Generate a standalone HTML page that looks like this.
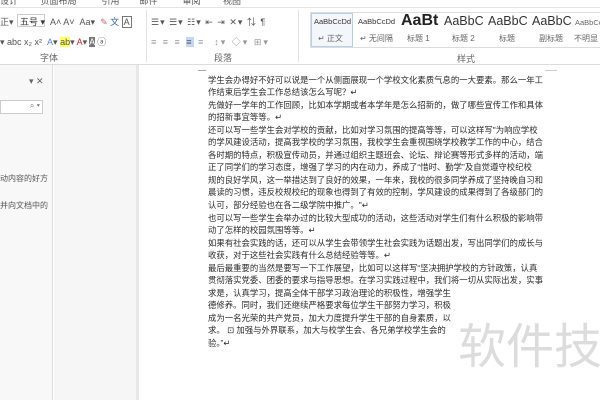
<!DOCTYPE html>
<html><head><meta charset="utf-8"><style>
*{margin:0;padding:0;box-sizing:border-box}
body{width:600px;height:400px;overflow:hidden;background:#fff;font-family:"Liberation Sans","Noto Sans CJK SC",sans-serif;position:relative;color:#444}
.a{position:absolute;white-space:nowrap}
.ic{position:absolute;font-size:9px;color:#555}
.doc div{position:absolute;left:208px;font-size:8.4px;line-height:12px;color:#2a2a2a;white-space:nowrap}
</style></head><body>
<div class="a" style="left:0;top:-6px;font-size:9px;color:#555;">设计 &nbsp;&nbsp;&nbsp;&nbsp;&nbsp;&nbsp;&nbsp; 页面布局 &nbsp;&nbsp;&nbsp;&nbsp;&nbsp;&nbsp;&nbsp;&nbsp; 引用 &nbsp;&nbsp;&nbsp;&nbsp;&nbsp;&nbsp; 邮件 &nbsp;&nbsp;&nbsp;&nbsp;&nbsp;&nbsp;&nbsp;&nbsp; 审阅 &nbsp;&nbsp;&nbsp;&nbsp;&nbsp;&nbsp;&nbsp; 视图</div>
<div class="a" style="left:0;top:7px;width:600px;height:1px;background:#e4e4e4"></div>
<div class="a" style="left:17px;top:14px;width:28px;height:13px;border:1px solid #ccc;font-size:9px;padding-left:2px;color:#333">五号 ▾</div>
<div class="ic" style="left:0;top:15px">正▾</div>
<div class="ic" style="left:50px;top:15px">A˄ A˅ &nbsp;Aa▾ &nbsp;<span style="color:#c66">✎</span> <span style="color:#36a">文</span> <span style="border:1px solid #777;padding:0 1px">A</span></div>
<div class="ic" style="left:0;top:35px">▾ abc x₂ x² &nbsp;<span style="color:#58c">A</span>▾ <span style="background:#ff6">ab</span>▾ <span style="color:#c22">A</span>▾ <span style="background:#777;color:#fff">A</span> ⓐ</div>
<div class="a" style="left:40px;top:51px;font-size:9px;color:#666">字体</div>
<div class="a" style="left:146px;top:10px;width:1px;height:52px;background:#e2e2e2"></div>
<div class="ic" style="left:151px;top:15px;letter-spacing:1px">☰▾ ☰▾ ☷▾ ⇤ ⇥ ✕▾ ⇅ ¶</div>
<div class="ic" style="left:151px;top:35px;letter-spacing:2px;color:#999">≡ ≡ ≡ <span style="background:#c5d9f1;color:#557">≡</span> ≡ &nbsp;↕▾ ◇▾ ⊞▾</div>
<div class="a" style="left:214px;top:51px;font-size:9px;color:#666">段落</div>
<div class="a" style="left:298px;top:10px;width:1px;height:52px;background:#e2e2e2"></div>
<div class="a" style="left:310px;top:12px;width:290px;height:36px;border:1px solid #ddd;border-right:none"></div>
<div class="a" style="left:311px;top:13px;width:42px;height:34px;border:1px solid #b8cfe8;background:#f3f7fc"></div>
<div class="a" style="left:314px;top:17px;font-size:7.5px;color:#333">AaBbCcDd</div>
<div class="a" style="left:318px;top:33px;font-size:8px;color:#666">↵ 正文</div>
<div class="a" style="left:358px;top:17px;font-size:7.5px;color:#333">AaBbCcDd</div>
<div class="a" style="left:360px;top:33px;font-size:8px;color:#666">↵ 无间隔</div>
<div class="a" style="left:401px;top:12px;font-size:16px;font-weight:bold;color:#222">AaBt</div>
<div class="a" style="left:407px;top:33px;font-size:8px;color:#666">标题 1</div>
<div class="a" style="left:444px;top:14px;font-size:12.5px;color:#333">AaBbC</div>
<div class="a" style="left:452px;top:33px;font-size:8px;color:#666">标题 2</div>
<div class="a" style="left:488px;top:14px;font-size:12.5px;color:#333">AaBbC</div>
<div class="a" style="left:499px;top:33px;font-size:8px;color:#666">标题</div>
<div class="a" style="left:532px;top:14px;font-size:12.5px;color:#333">AaBbC</div>
<div class="a" style="left:539px;top:33px;font-size:8px;color:#666">副标题</div>
<div class="a" style="left:575px;top:18px;font-size:7.5px;color:#666">AaBbCc</div>
<div class="a" style="left:574px;top:33px;font-size:8px;color:#666">不明显</div>
<div class="a" style="left:457px;top:52px;font-size:9px;color:#666">样式</div>
<div class="a" style="left:0;top:64px;width:600px;height:1px;background:#dcdcdc"></div>
<div class="a" style="left:0;top:65px;width:53px;height:335px;background:#f8f8f8;border-right:1px solid #ddd"></div>
<div class="a" style="left:29px;top:76px;font-size:9px;color:#666">▾ ✕</div>
<div class="a" style="left:0;top:100px;width:43px;height:14px;border:1px solid #ccc;background:#fff;font-size:8px;text-align:right;color:#777;padding-right:2px">⌕ ▾</div>
<div class="a" style="left:0;top:173px;font-size:8px;color:#555">动内容的好方</div>
<div class="a" style="left:0;top:200px;font-size:8px;color:#555">并向文档中的</div>
<div class="a" style="left:54px;top:65px;width:84px;height:335px;background:#f6f6f6"></div>
<div class="a" style="left:136px;top:65px;width:3px;height:335px;background:#e8e8e8"></div>
<div class="a" style="left:198px;top:70px;width:8px;height:1px;background:#aaa"></div>
<div class="a" style="left:545px;top:70px;width:12px;height:1px;background:#ccc"></div>
<div class="doc">
<div style="top:74px">学生会办得好不好可以说是一个从侧面展现一个学校文化素质气息的一大要素。那么一年工</div>
<div style="top:86px">作结束后学生会工作总结该怎么写呢？↵</div>
<div style="top:99px">先做好一学年的工作回顾，比如本学期或者本学年是怎么招新的，做了哪些宣传工作和具体</div>
<div style="top:111px">的招新事宜等等。↵</div>
<div style="top:124px">还可以写一些学生会对学校的贡献，比如对学习氛围的提高等等，可以这样写"为响应学校</div>
<div style="top:136px">的学风建设活动，提高我学校的学习氛围，我校学生会重视围绕学校教学工作的中心，结合</div>
<div style="top:149px">各时期的特点，积极宣传动员，并通过组织主题班会、论坛、辩论赛等形式多样的活动，端</div>
<div style="top:161px">正了同学们的学习态度，增强了学习的内在动力，养成了“惜时、勤学”及自觉遵守校纪校</div>
<div style="top:174px">规的良好学风，这一举措达到了良好的效果，一年来，我校的很多同学养成了坚持晚自习和</div>
<div style="top:186px">晨读的习惯，违反校规校纪的现象也得到了有效的控制，学风建设的成果得到了各级部门的</div>
<div style="top:199px">认可，部分经验也在各二级学院中推广。"↵</div>
<div style="top:212px">也可以写一些学生会举办过的比较大型成功的活动，这些活动对学生们有什么积极的影响带</div>
<div style="top:224px">动了怎样的校园氛围等等。↵</div>
<div style="top:237px">如果有社会实践的话，还可以从学生会带领学生社会实践为话题出发，写出同学们的成长与</div>
<div style="top:249px">收获，对于这些社会实践有什么总结经验等等。↵</div>
<div style="top:262px">最后最重要的当然是要写一下工作展望，比如可以这样写“坚决拥护学校的方针政策，认真</div>
<div style="top:274px">贯彻落实党委、团委的要求与指导思想。在学习实践过程中，我们将一切从实际出发，实事</div>
<div style="top:287px">求是，认真学习，提高全体干部学习政治理论的积极性，增强学生</div>
<div style="top:299px">德修养。同时，我们还继续严格要求每位学生干部努力学习，积极</div>
<div style="top:312px">成为一名光荣的共产党员，加大力度提升学生干部的自身素质，以</div>
<div style="top:324px">求。 ⊡ 加强与外界联系，加大与校学生会、各兄弟学校学生会的</div>
<div style="top:337px">验。”↵</div>
</div>
<div class="a" style="left:458px;top:312px;font-size:48px;color:#dcdcdc;font-family:'Noto Sans CJK SC',sans-serif;line-height:60px">软件技</div>
</body></html>
